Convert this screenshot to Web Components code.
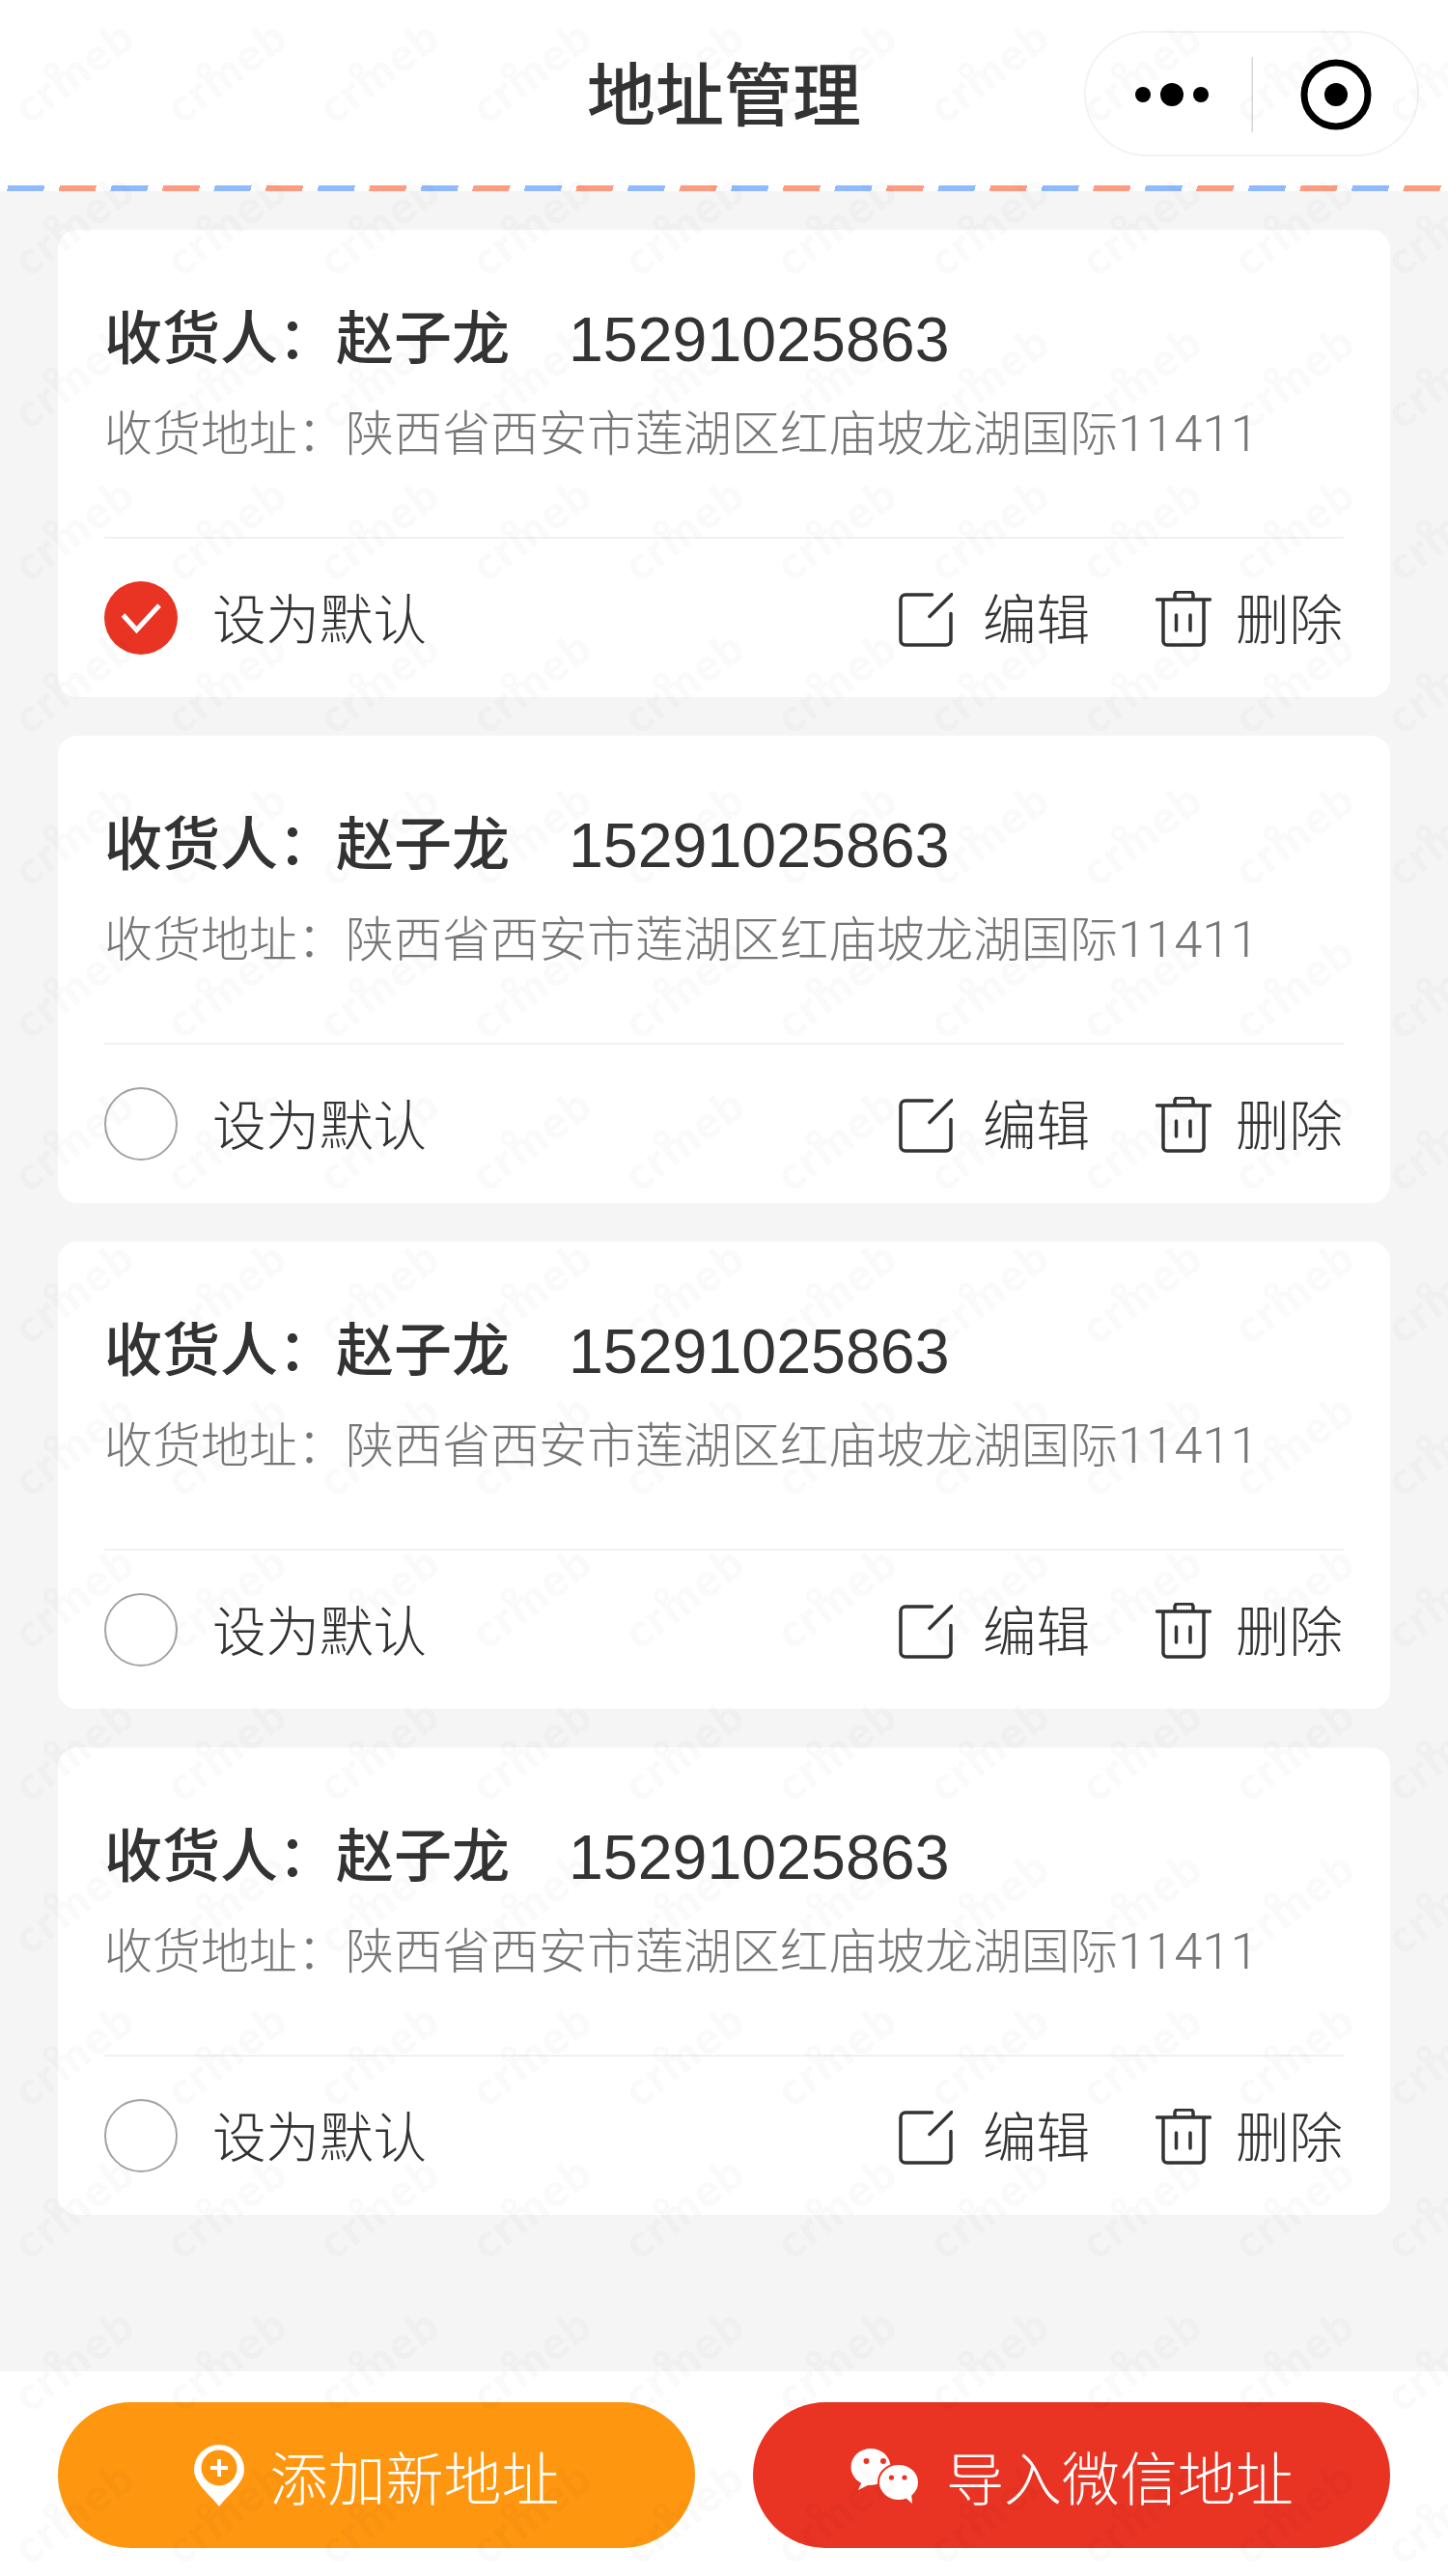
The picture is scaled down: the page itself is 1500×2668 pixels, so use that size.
<!DOCTYPE html>
<html lang="zh-CN">
<head>
<meta charset="utf-8">
<title>地址管理</title>
<style>
	html, body { margin: 0; padding: 0; background: #f5f5f5; }
</style>
</head>
<body>
<address-page></address-page>
<script>
const FONT = `"Liberation Sans", "Noto Sans CJK SC", sans-serif`;

class WaterMark extends HTMLElement {
	connectedCallback() {
		let shadow = this.attachShadow({mode: "open"});
		shadow.innerHTML = `
			<style>
				:host {
					display: block;
					position: absolute;
					inset: 0;
					pointer-events: none;
				}
				svg { display: block; width: 100%; height: 100%; }
				text {
					font: 900 47px Lato, "Noto Sans", sans-serif;
					letter-spacing: 2px;
					fill: #000;
				}
			</style>
			<svg xmlns="http://www.w3.org/2000/svg">
				<defs>
					<pattern id="tile" width="158" height="158" patternUnits="userSpaceOnUse">
						<g opacity="0.018">
							<text transform="translate(30,130) rotate(-37)">crmeb</text>
							<circle cx="53" cy="73" r="6" fill="none" stroke="#000" stroke-width="4.5"/>
						</g>
					</pattern>
				</defs>
				<rect width="100%" height="100%" fill="url(#tile)"/>
			</svg>
		`;
	}
}
customElements.define("water-mark", WaterMark);

class NavBar extends HTMLElement {
	connectedCallback() {
		let shadow = this.attachShadow({mode: "open"});
		shadow.innerHTML = `
			<style>
				:host {
					display: flex;
					position: relative;
					height: 192px;
					box-sizing: border-box;
					padding-bottom: 6px;
					align-items: center;
					justify-content: center;
					background: #fff;
					color: #333;
					font: 500 71px ${FONT};
				}
				#capsule {
					position: absolute;
					top: 32px;
					right: 30px;
					box-sizing: border-box;
					width: 347px;
					height: 130px;
					border: 2px solid #f3f3f3;
					border-radius: 65px;
				}
				#capsule svg { display: block; }
			</style>
			<div id="title"><slot></slot></div>
			<div id="capsule">
				<svg width="343" height="126" viewBox="1125 34 343 126">
					<circle cx="1184" cy="98" r="8" fill="#000"/>
					<circle cx="1214" cy="98" r="12" fill="#000"/>
					<circle cx="1244" cy="98" r="8" fill="#000"/>
					<rect x="1296.5" y="59" width="1.5" height="78" fill="#d8d8d8"/>
					<circle cx="1384" cy="98" r="33" fill="none" stroke="#000" stroke-width="7"/>
					<circle cx="1384" cy="98" r="12" fill="#000"/>
				</svg>
			</div>
		`;
	}
}
customElements.define("nav-bar", NavBar);

class AirmailStripe extends HTMLElement {
	connectedCallback() {
		let shadow = this.attachShadow({mode: "open"});
		shadow.innerHTML = `
			<style>
				:host {
					display: block;
					height: 6px;
					background: repeating-linear-gradient(105deg,
						#fff 0 8.3px,
						#8fbaff 8.3px 45px,
						#fff 45px 60px,
						#ff9b80 60px 96.7px,
						#fff 96.7px 103.49px);
				}
			</style>
		`;
	}
}
customElements.define("airmail-stripe", AirmailStripe);

class RoundCheck extends HTMLElement {
	connectedCallback() {
		let shadow = this.attachShadow({mode: "open"});
		let on = this.hasAttribute("checked");
		shadow.innerHTML = `
			<style>
				:host { display: block; width: 76px; height: 76px; flex: none; margin-top: 5px; }
				svg { display: block; }
			</style>
			<svg width="76" height="76" viewBox="0 0 76 76">
				${on
					? `<circle cx="38" cy="38" r="38" fill="#e93323"/>
					   <path d="M19.5 35L33.5 50.5L57 25" fill="none" stroke="#fff" stroke-width="5"/>`
					: `<circle cx="38" cy="38" r="37" fill="none" stroke="#a3a3a3" stroke-width="2"/>`}
			</svg>
		`;
	}
}
customElements.define("round-check", RoundCheck);

class ActionLink extends HTMLElement {
	connectedCallback() {
		let shadow = this.attachShadow({mode: "open"});
		let icons = {
			edit: `<svg width="56" height="56" viewBox="0 0 56 56" style="margin:8px 31px 0 0">
				<path d="M34.5 2H7a5 5 0 0 0-5 5V49a5 5 0 0 0 5 5H49a5 5 0 0 0 5-5V21.5M55 1.5L32 24.5" fill="none" stroke="#333" stroke-width="3.5" stroke-linecap="round"/>
			</svg>`,
			trash: `<svg width="58" height="58" viewBox="0 0 58 58" style="margin:6px 25px 0 0">
				<path d="M1.5 9H56.5M20 9V4a3 3 0 0 1 3-3H36a3 3 0 0 1 3 3V9M8 9V52a4 4 0 0 0 4 4H46a4 4 0 0 0 4-4V9M21.5 25V41M36 25V41" fill="none" stroke="#333" stroke-width="3.5" stroke-linecap="round"/>
			</svg>`
		};
		shadow.innerHTML = `
			<style>
				:host { display: flex; align-items: center; }
				svg { display: block; flex: none; }
			</style>
			${icons[this.getAttribute("icon")]}
			<slot></slot>
		`;
	}
}
customElements.define("action-link", ActionLink);

class AddressCard extends HTMLElement {
	connectedCallback() {
		let shadow = this.attachShadow({mode: "open"});
		let checked = this.hasAttribute("checked") ? "checked" : "";
		shadow.innerHTML = `
			<style>
				:host {
					display: block;
					box-sizing: border-box;
					height: 484px;
					padding: 0 48px;
					border-radius: 20px;
					background: #fff;
					color: #333;
					font-family: ${FONT};
				}
				#info {
					height: 320px;
					box-sizing: border-box;
					padding-top: 76px;
					border-bottom: 2px solid #f1f1f1;
				}
				#name {
					display: flex;
					height: 76px;
					line-height: 76px;
					font-size: 60px;
					font-weight: 500;
				}
				#phone {
					margin-left: 61px;
					font-size: 64.5px;
					font-weight: 400;
				}
				#addr {
					margin-top: 21px;
					height: 76px;
					line-height: 76px;
					font-size: 50px;
					font-weight: 300;
					color: #777;
				}
				#addr span {
					font-family: Roboto, sans-serif;
					font-size: 52.5px;
				}
				#bar {
					display: flex;
					align-items: center;
					justify-content: space-between;
					box-sizing: border-box;
					height: 164px;
					padding-bottom: 5px;
					font-size: 55.5px;
					font-weight: 300;
				}
				#def { display: flex; align-items: center; gap: 36px; }
				#ops { display: flex; align-items: center; gap: 68px; margin-right: 1px; }
			</style>
			<div id="info">
				<div id="name"><span>收货人：赵子龙</span><span id="phone">15291025863</span></div>
				<div id="addr">收货地址：陕西省西安市莲湖区红庙坡龙湖国际<span>11411</span></div>
			</div>
			<div id="bar">
				<div id="def"><round-check ${checked}></round-check><span>设为默认</span></div>
				<div id="ops">
					<action-link icon="edit">编辑</action-link>
					<action-link icon="trash">删除</action-link>
				</div>
			</div>
		`;
	}
}
customElements.define("address-card", AddressCard);

class FooterButton extends HTMLElement {
	connectedCallback() {
		let shadow = this.attachShadow({mode: "open"});
		shadow.innerHTML = `
			<style>
				:host {
					display: flex;
					flex: 1;
					align-items: center;
					justify-content: center;
					gap: var(--gap, 27px);
					height: 151px;
					border-radius: 76px;
					color: #fff;
					font: 300 60px ${FONT};
					background: var(--btn, #fe960f);
				}
			</style>
			<slot name="icon"></slot>
			<slot></slot>
		`;
	}
}
customElements.define("footer-button", FooterButton);

class AddressPage extends HTMLElement {
	connectedCallback() {
		let shadow = this.attachShadow({mode: "open"});
		let cards = "";
		for (let i = 0; i < 4; i++) cards += `<address-card ${i == 0 ? "checked" : ""}></address-card>`;
		shadow.innerHTML = `
			<style>
				:host {
					display: flex;
					flex-direction: column;
					position: relative;
					width: 1500px;
					height: 2668px;
					overflow: hidden;
					background: #f5f5f5;
				}
				#list {
					flex: 1;
					display: flex;
					flex-direction: column;
					gap: 40px;
					padding: 40px 60px 0;
				}
				#foot {
					display: flex;
					gap: 60px;
					height: 212px;
					box-sizing: border-box;
					padding: 32px 60px 0;
					background: #fff;
				}
				#foot svg { display: block; flex: none; overflow: visible; }
			</style>
			<nav-bar>地址管理</nav-bar>
			<airmail-stripe></airmail-stripe>
			<div id="list">${cards}</div>
			<div id="foot">
				<footer-button>
					<svg slot="icon" width="52" height="64" viewBox="0 0 52 64">
						<path fill="#fff" fill-rule="evenodd" d="M26 0A26 26 0 0 1 52 26C52 40 35 52 26 64C17 52 0 40 0 26A26 26 0 0 1 26 0ZM26 5.5A18.5 18.5 0 1 0 26 42.5A18.5 18.5 0 1 0 26 5.5Z"/>
						<path fill="#fff" d="M24 15H28V22H35V26H28V33H24V26H17V22H24Z"/>
					</svg>
					添加新地址
				</footer-button>
				<footer-button style="--btn:#e93323;--gap:30px">
					<svg slot="icon" width="70" height="58" viewBox="5 9 70 58">
						<ellipse cx="27" cy="29" rx="20.5" ry="19" fill="#fff"/>
						<path d="M18 44L14 53L26 47Z" fill="#fff"/>
						<circle cx="22.5" cy="23" r="3" fill="#e93323"/>
						<circle cx="40" cy="23" r="3" fill="#e93323"/>
						<ellipse cx="56" cy="45" rx="21" ry="19" fill="#fff" stroke="#e93323" stroke-width="2"/>
						<path d="M62 60L70 67L69 56Z" fill="#fff"/>
						<circle cx="48.5" cy="40" r="2.6" fill="#e93323"/>
						<circle cx="62" cy="40" r="2.6" fill="#e93323"/>
					</svg>
					导入微信地址
				</footer-button>
			</div>
			<water-mark></water-mark>
		`;
	}
}
customElements.define("address-page", AddressPage);
</script>
</body>
</html>
